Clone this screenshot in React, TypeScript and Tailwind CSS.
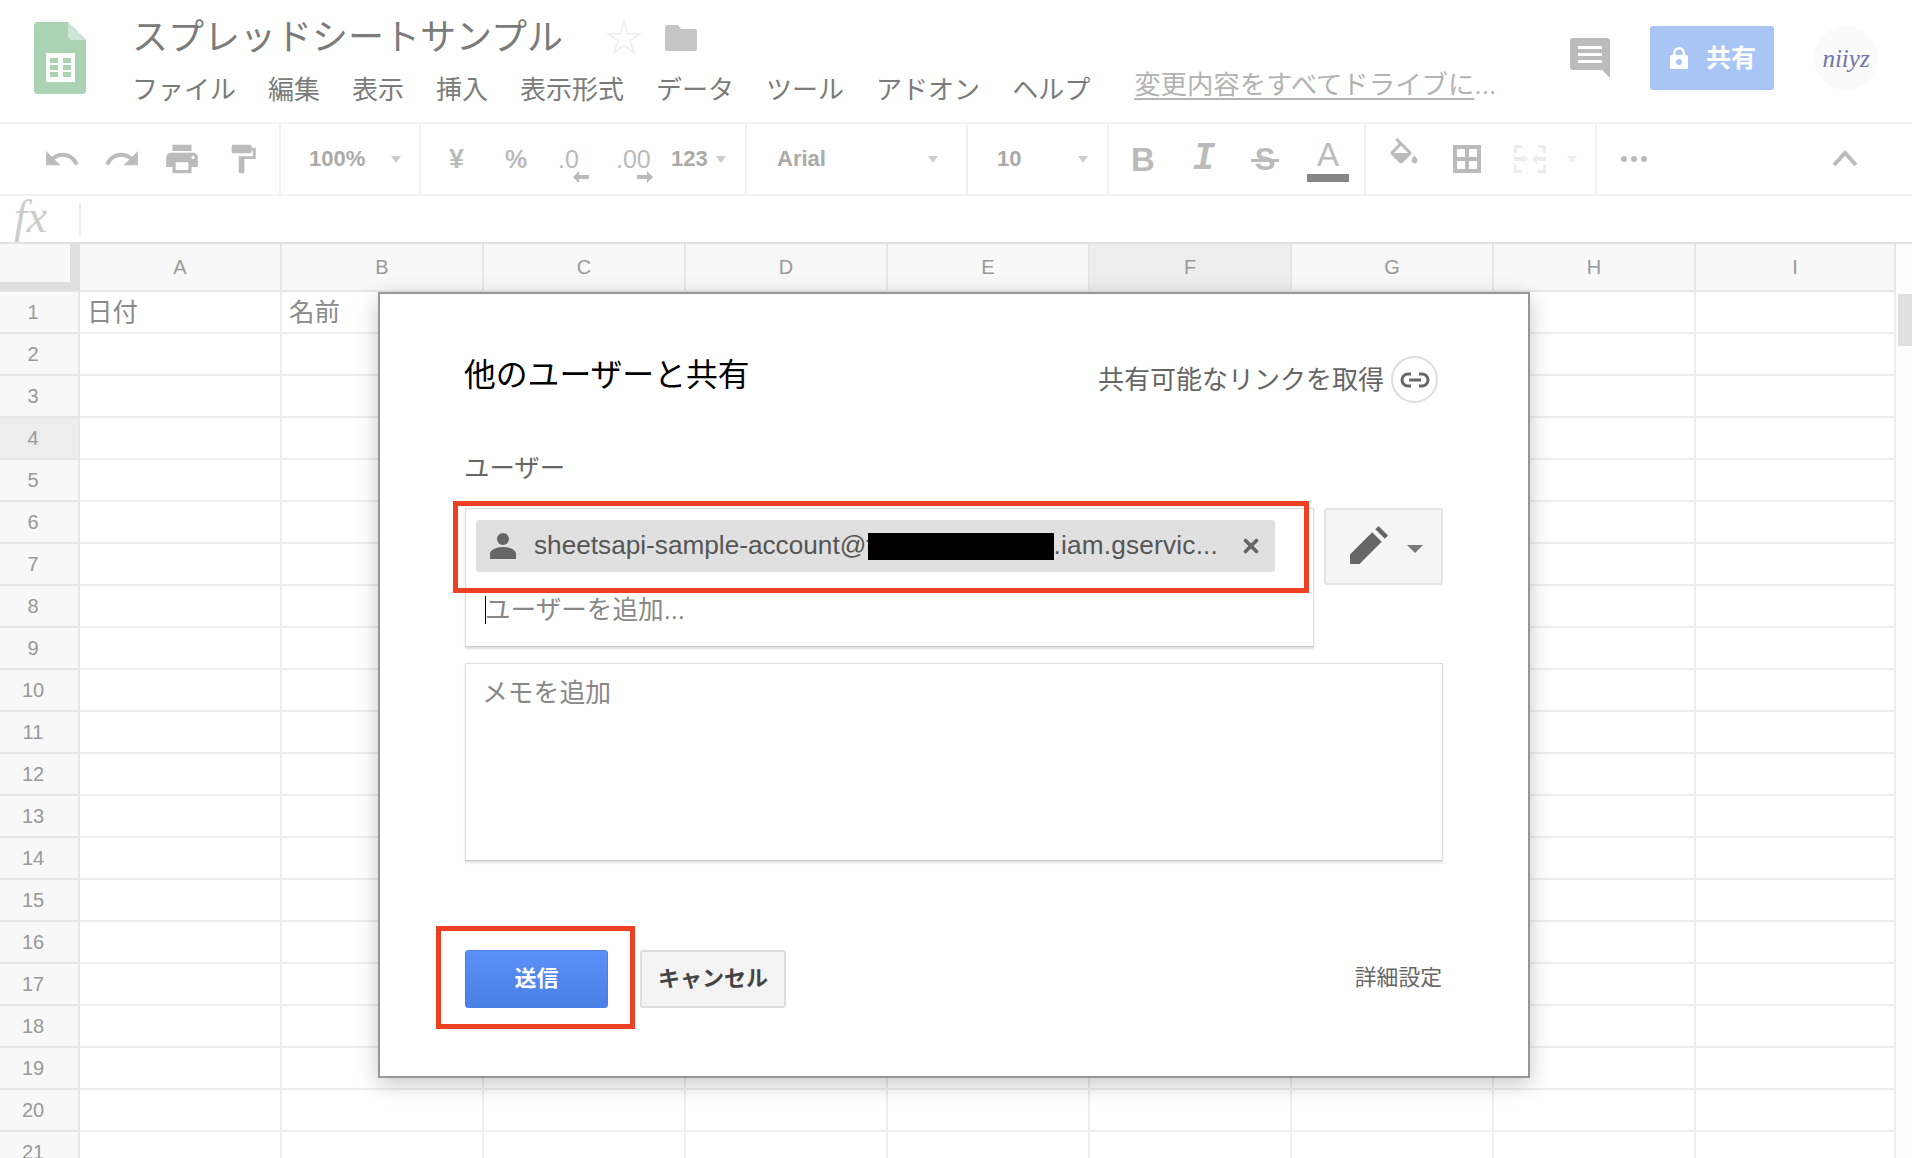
import { X } from 'lucide-react';

const MENU = ['ファイル', '編集', '表示', '挿入', '表示形式', 'データ', 'ツール', 'アドオン', 'ヘルプ'];

const COLUMNS = [
  { label: 'A', width: 'w-[202px]', cell: '日付' },
  { label: 'B', width: 'w-[202px]', cell: '名前' },
  { label: 'C', width: 'w-[202px]' },
  { label: 'D', width: 'w-[202px]' },
  { label: 'E', width: 'w-[202px]' },
  { label: 'F', width: 'w-[202px]', active: true },
  { label: 'G', width: 'w-[202px]' },
  { label: 'H', width: 'w-[202px]' },
  { label: 'I', width: 'w-[200px]' },
];

const ROWS = Array.from({ length: 21 }, (_, i) => i + 1);

function Caret({ className = '' }: { className?: string }) {
  return <span className={`block h-0 w-0 flex-none border-x-[5px] border-t-[7px] border-x-transparent border-t-[#ccc] ${className}`} />;
}

function Icon({ d, size, className = '' }: { d: string; size: number; className?: string }) {
  return (
    <svg width={size} height={size} viewBox="0 0 24 24" className={`flex-none fill-[#bbb] ${className}`}>
      <path d={d} />
    </svg>
  );
}

function SheetsLogo() {
  return (
    <svg width="52" height="72" viewBox="0 0 52 72" className="flex-none">
      <path d="M4 0h30l18 18v50a4 4 0 0 1-4 4H4a4 4 0 0 1-4-4V4a4 4 0 0 1 4-4z" fill="#a9d3b3" />
      <path d="M34 0l18 18H38a4 4 0 0 1-4-4z" fill="#cde7d7" />
      <rect x="12" y="31" width="29" height="29" fill="#fff" />
      <path d="M16 36h8v5h-8zM29 36h8v5h-8zM16 43h8v5h-8zM29 43h8v5h-8zM16 50h8v5h-8zM29 50h8v5h-8z" fill="#a9d3b3" />
    </svg>
  );
}

function Header() {
  return (
    <div className="flex h-[122px] flex-none">
      <div className="ml-[34px] mt-[22px]">
        <SheetsLogo />
      </div>
      <div className="ml-[46px] flex flex-col">
        <div className="mt-[15px] flex h-[46px] items-center">
          <span className="text-[36px] leading-none text-[#7b7b7b]">スプレッドシートサンプル</span>
          <span className="ml-[42px] text-[38px] leading-none text-[#eee]">☆</span>
          <svg width="32" height="26" viewBox="0 0 32 26" className="ml-[22px] flex-none">
            <path d="M2 0h11l3 4h14a2 2 0 0 1 2 2v18a2 2 0 0 1-2 2H2a2 2 0 0 1-2-2V2a2 2 0 0 1 2-2z" fill="#c6c6c6" />
          </svg>
        </div>
        <div className="mt-[10px] flex items-center">
          <div className="flex gap-[32px] text-[26px] leading-[38px] text-[#7b7b7b]">
            {MENU.map((m) => (
              <span key={m}>{m}</span>
            ))}
          </div>
          <span className="relative -top-[5px] ml-[44px] text-[26.400px] leading-[38px] text-[#b3b3b3]">
            <span className="underline underline-offset-4">変更内容をすべてドライブに</span>...
          </span>
        </div>
      </div>
      <div className="ml-auto mr-[34px] mt-[26px] flex items-start">
        <svg width="40" height="40" viewBox="0 0 40 40" className="mt-[12px] flex-none">
          <path d="M3 0h34a3 3 0 0 1 3 3v37l-8-8H3a3 3 0 0 1-3-3V3a3 3 0 0 1 3-3z" fill="#bbb" />
          <path d="M8 8h24v3H8zM8 15h24v3H8zM8 22h24v3H8z" fill="#fff" />
        </svg>
        <div className="ml-[40px] flex h-[64px] w-[124px] items-center rounded-[3px] bg-[#a9c5f5] pl-[20px]">
          <svg width="18" height="22" viewBox="0 0 18 22" className="flex-none">
            <path d="M3 8V6a6 6 0 0 1 12 0v2h1.500a1.500 1.500 0 0 1 1.500 1.500v11a1.500 1.500 0 0 1-1.500 1.500h-15A1.500 1.500 0 0 1 0 20.500v-11A1.500 1.500 0 0 1 1.500 8zm2.500 0h7V6a3.500 3.500 0 0 0-7 0z" fill="#fff" />
            <circle cx="9" cy="15" r="3" fill="#a9c5f5" />
          </svg>
          <span className="ml-[18px] text-[25px] font-bold leading-none text-white">共有</span>
        </div>
        <div className="ml-[40px] flex h-[64px] w-[64px] items-center justify-center rounded-full bg-[#fafafa]">
          <span className="font-['Liberation_Serif',serif] text-[25px] italic leading-none text-[#6f72a3]">niiyz</span>
        </div>
      </div>
    </div>
  );
}

function Section({ className, children }: { className: string; children?: React.ReactNode }) {
  return <div className={`flex h-full flex-none items-center border-r-2 border-[#f1f1f1] ${className}`}>{children}</div>;
}

function Toolbar() {
  const label = 'text-[22px] font-bold leading-none text-[#aaa]';
  return (
    <div className="flex h-[74px] flex-none border-y-2 border-[#f1f1f1]">
      <Section className="w-[281px] pl-[43px]">
        <Icon size={38} d="M12.500 8c-2.650 0-5.050.99-6.900 2.600L2 7v9h9l-3.620-3.620c1.390-1.160 3.160-1.880 5.120-1.880 3.540 0 6.550 2.310 7.600 5.500l2.370-.78C21.080 11.030 17.150 8 12.500 8z" />
        <Icon size={38} className="ml-[22px]" d="M18.400 10.600C16.550 8.990 14.150 8 11.500 8c-4.650 0-8.580 3.030-9.960 7.220L3.900 16c1.050-3.190 4.050-5.500 7.600-5.500 1.950 0 3.730.72 5.120 1.880L13 16h9V7l-3.600 3.600z" />
        <Icon size={38} className="ml-[22px]" d="M19 8H5c-1.660 0-3 1.340-3 3v6h4v4h12v-4h4v-6c0-1.660-1.340-3-3-3zm-3 11H8v-5h8v5zm3-7c-.55 0-1-.45-1-1s.45-1 1-1 1 .45 1 1-.45 1-1 1zm-1-9H6v4h12V3z" />
        <Icon size={34} className="ml-[25px]" d="M18 4V3c0-.55-.45-1-1-1H5c-.55 0-1 .45-1 1v4c0 .55.45 1 1 1h12c.55 0 1-.45 1-1V6h1v4H9v11c0 .55.45 1 1 1h2c.55 0 1-.45 1-1v-9h8V4h-3z" />
      </Section>
      <Section className="w-[140px] pl-[28px]">
        <span className={label}>100%</span>
        <Caret className="ml-[26px]" />
      </Section>
      <Section className="w-[326px] pl-[28px]">
        <span className="w-[16px] text-[27px] font-bold leading-none text-[#bbb]">¥</span>
        <span className="ml-[40px] w-[22px] text-[25px] font-bold leading-none text-[#bbb]">%</span>
        <span className="relative ml-[31px] w-[20px] text-[25px] leading-none text-[#bbb]">
          .0
          <svg width="16" height="12" viewBox="0 0 16 12" className="absolute left-[15px] top-[24px]">
            <path d="M6 0L0 6l6 6V8h10V4H6z" fill="#bbb" />
          </svg>
        </span>
        <span className="relative ml-[38px] w-[34px] text-[25px] leading-none text-[#bbb]">
          .00
          <svg width="16" height="12" viewBox="0 0 16 12" className="absolute left-[21px] top-[24px]">
            <path d="M10 0l6 6-6 6V8H0V4h10z" fill="#bbb" />
          </svg>
        </span>
        <span className={`${label} ml-[21px]`}>123</span>
        <Caret className="ml-[8px]" />
      </Section>
      <Section className="w-[221px] pl-[30px]">
        <span className={label}>Arial</span>
        <Caret className="ml-auto mr-[28px]" />
      </Section>
      <Section className="w-[141px] pl-[29px]">
        <span className={label}>10</span>
        <Caret className="ml-auto mr-[19px]" />
      </Section>
      <Section className="w-[257px] pl-[22px]">
        <span className="w-[22px] text-[33px] font-bold leading-none text-[#bbb]">B</span>
        <span className="ml-[37px] w-[28px] text-center font-['Liberation_Mono',monospace] text-[38px] font-bold italic leading-none text-[#bbb]">I</span>
        <span className="relative ml-[33px] w-[28px] text-center text-[31px] font-bold leading-none text-[#bbb]">
          S
          <span className="absolute inset-x-0 top-[15px] h-[3px] bg-[#bbb]" />
        </span>
        <span className="relative ml-[28px] w-[42px] pb-[10px] text-center text-[33px] leading-none text-[#bbb]">
          A
          <span className="absolute inset-x-0 -bottom-[1px] h-[8px] bg-[#858585]" />
        </span>
      </Section>
      <Section className="w-[231px] pl-[20px]">
        <Icon size={36} className="-mt-[6px]" d="M16.560 8.940L7.620 0 6.210 1.410l2.380 2.380-5.150 5.150c-.59.59-.59 1.540 0 2.120l5.500 5.500c.29.29.68.44 1.060.44s.77-.15 1.060-.44l5.500-5.500c.59-.58.59-1.530 0-2.120zM5.210 10L10 5.210 14.790 10H5.210zM19 11.500s-2 2.170-2 3.500c0 1.100.9 2 2 2s2-.9 2-2c0-1.330-2-3.500-2-3.500z" />
        <svg width="28" height="28" viewBox="0 0 28 28" className="ml-[31px] flex-none">
          <path d="M0 0h28v28H0zM4 4v8h8V4zm12 0v8h8V4zM4 16v8h8v-8zm12 0v8h8v-8z" fill="#bbb" fillRule="evenodd" />
        </svg>
        <svg width="32" height="28" viewBox="0 0 32 28" className="ml-[33px] flex-none">
          <path d="M0 0h8v3H3v5H0zM24 0h8v8h-3V3h-5zM0 20h3v5h5v3H0zM29 20h3v8h-8v-3h5zM0 12h9V9l5 5-5 5v-3H0zM32 12h-9V9l-5 5 5 5v-3h9z" fill="#ececec" />
        </svg>
        <Caret className="ml-[21px] border-t-[#eee]" />
      </Section>
      <div className="flex flex-1 items-center pl-[23px]">
        <svg width="28" height="8" viewBox="0 0 28 8" className="flex-none">
          <circle cx="4" cy="4" r="3" fill="#bbb" />
          <circle cx="14" cy="4" r="3" fill="#bbb" />
          <circle cx="24" cy="4" r="3" fill="#bbb" />
        </svg>
        <svg width="26" height="18" viewBox="0 0 26 18" className="-mt-[3px] ml-auto mr-[54px] flex-none">
          <path d="M2 16L13 4l11 12" fill="none" stroke="#bbb" strokeWidth="4" />
        </svg>
      </div>
    </div>
  );
}

function FormulaBar() {
  return (
    <div className="flex h-[46px] flex-none items-center pl-[14px]">
      <span className="-mt-[4px] w-[65px] font-['Liberation_Serif',serif] text-[46px] italic leading-none text-[#ccc]">fx</span>
      <span className="h-[33px] w-[2px] bg-[#eee]" />
    </div>
  );
}

function Grid() {
  return (
    <div className="flex min-h-0 flex-1 border-t-2 border-[#e2e2e2]">
      <div className="w-[1896px] flex-none">
        <div className="flex h-[48px] border-b-2 border-[#e6e6e6] bg-[#f8f8f8]">
          <div className="h-full w-[80px] flex-none border-b-[8px] border-r-[10px] border-[#dedede]" />
          {COLUMNS.map((c) => (
            <div
              key={c.label}
              className={`flex ${c.width} flex-none items-center justify-center border-r-2 border-[#e6e6e6] text-[20px] leading-none text-[#999] ${c.active ? 'bg-[#ededed]' : ''}`}
            >
              {c.label}
            </div>
          ))}
        </div>
        {ROWS.map((row) => (
          <div key={row} className="flex h-[42px]">
            <div
              className={`flex w-[80px] flex-none items-center justify-center border-b-2 border-r-2 border-[#e6e6e6] pr-[12px] text-[20px] leading-none text-[#999] ${row === 4 ? 'bg-[#ededed]' : 'bg-[#f8f8f8]'}`}
            >
              {row}
            </div>
            {COLUMNS.map((c) => (
              <div
                key={c.label}
                className={`flex ${c.width} flex-none items-center border-b-2 border-r-2 border-[#eee] pl-[7px] pt-[2px] text-[25.500px] leading-none text-[#8a8a8a]`}
              >
                {row === 1 ? c.cell : null}
              </div>
            ))}
          </div>
        ))}
      </div>
      <div className="flex-1 bg-[#fdfdfd] pl-[2px] pt-[48px]">
        <div className="mt-[2px] h-[52px] bg-[#e0e0e0]" />
      </div>
    </div>
  );
}

function ShareDialog() {
  return (
    <div className="absolute left-[378px] top-[292px] flex h-[786px] w-[1152px] flex-col border-2 border-[#979797] bg-white pl-[85px] pr-[85px] pt-[62px] shadow-[0_6px_20px_rgba(0,0,0,0.22)]">
      <div className="flex h-[47px] items-center justify-between">
        <span className="-ml-[1px] mb-[7px] text-[31.800px] leading-none text-black">他のユーザーと共有</span>
        <div className="mr-[5px] flex items-center">
          <span className="text-[26px] leading-none text-[#666]">共有可能なリンクを取得</span>
          <span className="ml-[7px] flex h-[47px] w-[47px] items-center justify-center rounded-full border-2 border-[#ddd]">
            <svg width="30" height="18" viewBox="0 0 30 18">
              <path d="M11 3H8a6 6 0 0 0 0 12h3M19 3h3a6 6 0 0 1 0 12h-3M9 9h12" fill="none" stroke="#666" strokeWidth="3" />
            </svg>
          </span>
        </div>
      </div>

      <div className="-ml-[1px] mt-[46px] flex h-[36px] items-center pt-[3px] text-[25.400px] leading-none text-[#666]">ユーザー</div>

      <div className="mt-[23px] flex items-start">
        <div className="h-[139px] w-[849px] flex-none border border-[#ddd] border-b-[#ccc] pl-[10px] pt-[11px] shadow-[0_2px_2px_rgba(0,0,0,0.12)]">
          <div className="flex h-[52px] w-[799px] items-center rounded-[3px] bg-[#e0e0e0] pl-[14px] text-[26.200px] leading-none text-[#555]">
            <svg width="26" height="26" viewBox="0 0 26 26" className="flex-none">
              <circle cx="13" cy="6" r="6" fill="#666" />
              <path d="M0 26v-5c0-4 6-7 13-7s13 3 13 7v5z" fill="#666" />
            </svg>
            <span className="-mt-[2px] ml-[18px] flex-none whitespace-nowrap">sheetsapi-sample-account@t</span>
            <span className="-ml-[6px] h-[27px] w-[186px] flex-none bg-black" />
            <span className="-mt-[2px] flex-none whitespace-nowrap tracking-[0.2px]">.iam.gservic...</span>
            <X size={22} strokeWidth={4} className="ml-auto mr-[13px] flex-none text-[#666]" />
          </div>
          <div className="mt-[25px] flex h-[28px] items-center pl-[9px]">
            <span className="-mt-[3px] h-[28px] w-px flex-none bg-black" />
            <span className="-ml-[1px] text-[25.600px] leading-none text-[#888]">ユーザーを追加...</span>
          </div>
        </div>
        <div className="ml-[10px] flex h-[77px] w-[119px] flex-none items-center rounded-[3px] border-2 border-[#e3e3e3] bg-[#f5f5f5] pl-[24px]">
          <svg width="38" height="38" viewBox="0 0 36 36" className="-mt-[3px] flex-none">
            <path d="M0 36v-9L21 6l9 9L9 36zM24 3l3-3 9 9-3 3z" fill="#666" />
          </svg>
          <span className="ml-[19px] mt-[5px] block h-0 w-0 border-x-[8px] border-t-[8px] border-x-transparent border-t-[#777]" />
        </div>
      </div>

      <div className="mt-[16px] h-[198px] w-[978px] border border-[#ddd] border-b-[#ccc] pl-[16px] pt-[11px] text-[25.800px] leading-[36px] text-[#888] shadow-[0_2px_2px_rgba(0,0,0,0.12)]">
        メモを追加
      </div>

      <div className="mt-[89px] flex h-[58px] w-[978px] items-center">
        <div className="flex h-full w-[143px] items-center justify-center rounded-[3px] border border-[#4a80e6] bg-gradient-to-b from-[#5a90f7] to-[#4a80e4] text-[22px] font-bold leading-none text-white">
          送信
        </div>
        <div className="ml-[32px] flex h-full w-[146px] items-center justify-center rounded-[3px] border-2 border-[#ddd] bg-[#f3f3f3] text-[22px] font-bold leading-none text-[#444]">
          キャンセル
        </div>
        <span className="-mt-[2px] ml-auto mr-[1px] text-[21.800px] leading-none text-[#666]">詳細設定</span>
      </div>

      <div className="absolute left-[73px] top-[207px] h-[92px] w-[856px] border-[5px] border-[#ee4023]" />
      <div className="absolute left-[56px] top-[632px] h-[103px] w-[199px] border-[5px] border-[#ee4023]" />
    </div>
  );
}

export default function App() {
  return (
    <div className="relative flex h-[1158px] w-full flex-col overflow-hidden bg-white font-['Liberation_Sans','Noto_Sans_CJK_JP',sans-serif]">
      <Header />
      <Toolbar />
      <FormulaBar />
      <Grid />
      <ShareDialog />
    </div>
  );
}
